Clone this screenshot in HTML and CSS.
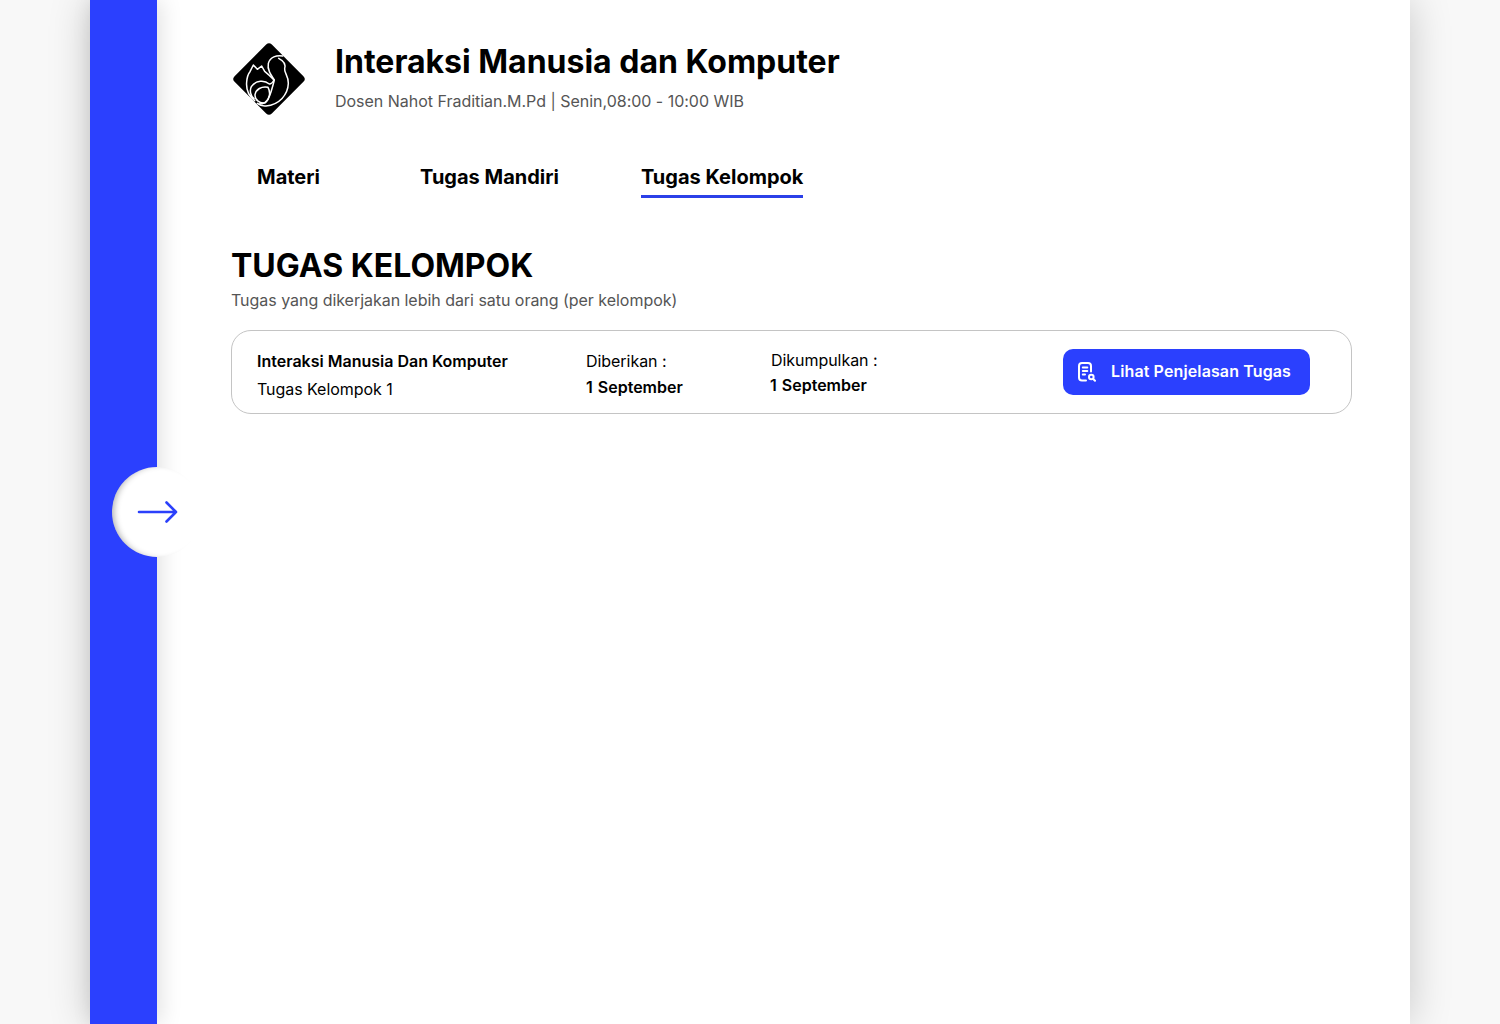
FILE: index.html
```html
<!DOCTYPE html>
<html lang="id">
<head>
<meta charset="utf-8">
<title>Tugas Kelompok</title>
<link rel="stylesheet" href="styles.css">
</head>
<body>
<div class="frame">
  <aside class="sidebar">
    <button class="toggle" aria-label="Buka menu">
      <svg class="toggle-icon" width="42" height="26" viewBox="0 0 42 26" fill="none" stroke="#2b40fb" stroke-width="2.600" stroke-linecap="round" stroke-linejoin="round"><path d="M2 13H39M29.500 3.500L39 13L29.500 22.500"/></svg>
    </button>
  </aside>
  <main class="main">
    <header class="course">
      <svg class="logo" width="74" height="74" viewBox="33 36 222 222">
        <rect x="68" y="68" width="158" height="158" rx="12" transform="rotate(45 147 147)" fill="#000"/>
        <g fill="none" stroke="#fff" stroke-width="4.500" stroke-linecap="round" stroke-linejoin="round">
          <path d="M188 78C170 74 150 82 145 100C141 118 152 134 163 150C158 170 153 190 145 206C140 216 130 222 118 222"/>
          <path d="M176 85C190 92 198 102 194 116C192 128 206 138 205 160C204 194 178 224 138 228C128 229 120 226 112 220"/>
          <path d="M104 212C86 198 78 178 80 156C81 142 84 132 90 125L100 105L112 118L125 108L134 124C144 132 153 140 162 150C158 158 154 162 148 162C134 150 108 150 94 170C88 182 92 198 102 206"/>
          <path d="M105 194C108 178 124 168 144 172C152 186 150 206 136 218C120 222 104 210 105 194Z"/>
        </g>
      </svg>
      <div class="course-text">
        <h1 class="course-title">Interaksi Manusia dan Komputer</h1>
        <p class="course-meta">Dosen Nahot Fraditian.M.Pd | Senin,08:00 - 10:00 WIB</p>
      </div>
    </header>
    <nav class="tabs">
      <a class="tab tab-first">Materi</a>
      <a class="tab">Tugas Mandiri</a>
      <a class="tab tab-active">Tugas Kelompok</a>
    </nav>
    <section class="section">
      <h2 class="section-title">TUGAS KELOMPOK</h2>
      <p class="section-sub">Tugas yang dikerjakan lebih dari satu orang (per kelompok)</p>
      <article class="card">
        <div class="col col-name">
          <strong class="name">Interaksi Manusia Dan Komputer</strong>
          <span class="plain">Tugas Kelompok 1</span>
        </div>
        <div class="col col-given">
          <span class="plain">Diberikan :</span>
          <strong class="date">1 September</strong>
        </div>
        <div class="col col-due">
          <span class="plain due-label">Dikumpulkan :</span>
          <strong class="date">1 September</strong>
        </div>
        <button class="action">
          <svg class="action-icon" width="20" height="20" viewBox="0 0 20 20" fill="none" stroke="#fff" stroke-width="2" stroke-linecap="round" stroke-linejoin="round"><path d="M9 18.500H5A3 3 0 0 1 2 15.500V4A3 3 0 0 1 5 1H11A3 3 0 0 1 14 4V9.500"/><path d="M5.800 5.500H10.300M5.800 9H10.300M5.800 12.500H8"/><circle cx="14.300" cy="15" r="2.300"/><path d="M16.200 17L18 18.800"/></svg>
          <span class="action-label">Lihat Penjelasan Tugas</span>
        </button>
      </article>
    </section>
  </main>
</div>
</body>
</html>
```
FILE: styles.css
```css
* { box-sizing: border-box; }
html, body { height: 100%; }
body {
  margin: 0;
  background: #f8f8f8;
  font-family: Inter, "Liberation Sans", sans-serif;
  color: #000;
  overflow: hidden;
}
.frame {
  width: 1320px;
  height: 1024px;
  margin: 0 auto;
  background: #fff;
  display: flex;
  box-shadow: 0 0 40px rgba(0, 0, 0, 0.2);
}
.sidebar {
  width: 67px;
  flex: none;
  background: #2b40fe;
  position: relative;
  box-shadow: 4px 0 22px rgba(0, 0, 0, 0.12);
}
.toggle {
  position: absolute;
  left: 22px;
  top: 467px;
  width: 90px;
  height: 90px;
  padding: 0;
  border: 0;
  border-radius: 50%;
  background: #fff;
  box-shadow: inset 5px 0 6px -3px rgba(0, 0, 0, 0.3);
}
.toggle-icon {
  position: absolute;
  left: 25px;
  top: 32px;
}
.main {
  flex: 1;
  padding: 42px 58px 0 74px;
  min-width: 0;
}
.course {
  display: flex;
  gap: 30px;
  align-items: flex-start;
}
.logo { display: block; flex: none; }
.course-text { padding-top: 1px; }
.course-title {
  margin: 0;
  font-size: 32px;
  line-height: 38px;
  font-weight: 700;
}
.course-meta {
  margin: 10px 0 0;
  font-size: 16px;
  line-height: 20px;
  color: #555;
  letter-spacing: -0.02px;
}
.tabs {
  display: flex;
  gap: 82px;
  margin-top: 39px;
  padding-left: 26px;
}
.tab {
  height: 43px;
  padding-top: 10px;
  font-size: 20px;
  line-height: 24px;
  font-weight: 700;
}
.tab-first { margin-right: 18px; }
.tab-active { border-bottom: 3px solid #2b40e8; }
.section { margin-top: 48px; }
.section-title {
  margin: 0;
  font-size: 32px;
  line-height: 40px;
  font-weight: 700;
}
.section-sub {
  margin: 4px 0 0;
  font-size: 16px;
  line-height: 20px;
  color: #555;
  letter-spacing: -0.035px;
}
.card {
  display: grid;
  grid-template-columns: 329px 184px 293px 247px;
  align-items: center;
  height: 84px;
  margin-top: 20px;
  padding-left: 25px;
  border: 1px solid #c4c4c4;
  border-radius: 20px;
}
.col {
  display: flex;
  flex-direction: column;
  font-size: 16px;
}
.col-name { gap: 8px; margin-top: 6px; }
.col-given { gap: 6px; margin-top: 4px; }
.col-due { gap: 5px; margin-top: 1px; }
.name {
  font-size: 16px;
  line-height: 20px;
  font-weight: 600;
}
.date {
  font-size: 16px;
  line-height: 20px;
  font-weight: 600;
  word-spacing: 1px;
}
.plain {
  line-height: 20px;
  font-weight: 400;
  letter-spacing: -0.05px;
}
.due-label { margin-left: 1px; }
.action {
  display: flex;
  align-items: center;
  gap: 14px;
  width: 247px;
  height: 46px;
  padding: 0 0 0 14px;
  border: 0;
  border-radius: 10px;
  background: #2b40fe;
  color: #fff;
  font: 600 16px/20px Inter, "Liberation Sans", sans-serif;
  letter-spacing: 0.12px;
}
.action-label { padding-bottom: 2px; }
```
